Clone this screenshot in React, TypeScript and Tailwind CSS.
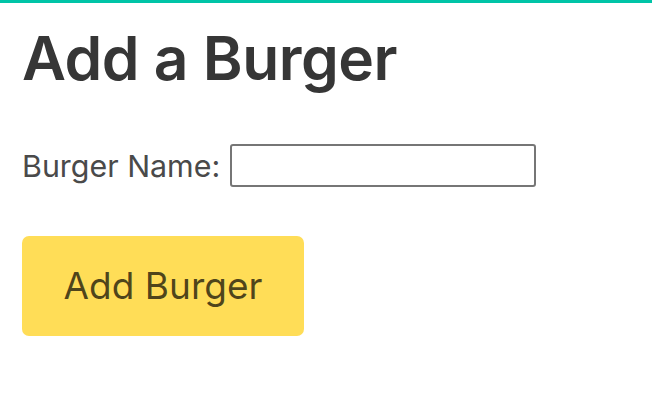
import React from 'react';

const App: React.FC = () => {
  return (
    <div className="min-h-[400px] w-[652px] bg-white border-t-[3px] border-[#00c4a7] font-['Inter',sans-serif]">
      <div className="px-[22px] pt-[20px]">
        <h1 className="text-[60.5px] leading-[70px] font-semibold text-[#363636] tracking-[-0.5px]">Add a Burger</h1>

        <form className="mt-[51px]" onSubmit={(e) => e.preventDefault()}>
          <div className="flex items-center">
            <label htmlFor="burger" className="text-[30.4px] leading-[40px] text-[#4a4a4a] mr-[10px]">
              Burger Name:
            </label>
            <input
              id="burger"
              type="text"
              className="w-[306px] h-[43px] border-2 border-[#767676] rounded-[3px] bg-white"
            />
          </div>

          <button
            type="submit"
            className="mt-[49px] w-[282px] h-[100px] rounded-[7px] bg-[#ffdd57] text-[37px] text-[rgba(0,0,0,0.7)]"
          >
            Add Burger
          </button>
        </form>
      </div>
    </div>
  );
};

export default App;
